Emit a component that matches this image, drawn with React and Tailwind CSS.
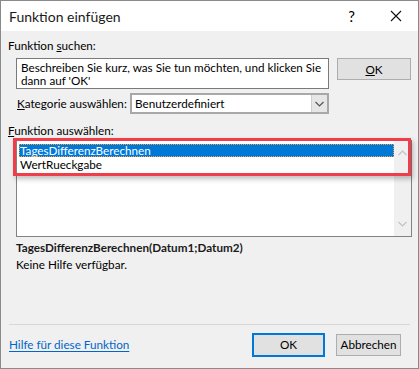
import React from 'react';

const font = { fontFamily: '"Segoe UI", Lato, "Liberation Sans", Arial, sans-serif' };

const Chevron = ({ up, className }) => (
  <svg width="9" height="6" viewBox="0 0 9 6" className={className}>
    <path d={up ? 'M0.5 5 L4.5 1 L8.5 5' : 'M0.5 1 L4.5 5 L8.5 1'} fill="none" stroke="currentColor" strokeWidth="1.2" />
  </svg>
);

export default function App() {
  return (
    <div
      className="w-[419px] h-[369px] border border-[#8a8a8a] bg-[#f0f0f0] text-[11.7px] text-black flex flex-col"
      style={font}
    >
      {/* title bar */}
      <div className="h-[30px] bg-white flex items-center pl-[8px] shrink-0">
        <span className="text-[14px] text-[#1a1a1a]">Funktion einfügen</span>
        <span className="ml-auto text-[15px] mr-[35px]">?</span>
        <svg width="12" height="12" viewBox="0 0 12 12" className="mr-[16px]">
          <path d="M1 1 L11 11 M11 1 L1 11" stroke="#111" strokeWidth="1.1" />
        </svg>
      </div>

      <div className="flex-1 flex flex-col px-[7px]">
        <div className="mt-[7px] leading-[14px]">
          Funktion <span className="underline">s</span>uchen:
        </div>

        <div className="mt-[6px] flex">
          <div className="ml-[8px] w-[313px] h-[31px] bg-white border border-[#7a7a7a] px-[4px] pt-[2px] leading-[13px]">
            Beschreiben Sie kurz, was Sie tun möchten, und klicken Sie dann auf 'OK'
          </div>
          <button className="ml-[8px] w-[74px] h-[22px] bg-[#e1e1e1] border border-[#adadad] leading-[20px]">
            <span className="underline">O</span>K
          </button>
        </div>

        <div className="mt-[4px] flex items-center">
          <span className="ml-[9px] w-[113px] whitespace-nowrap">
            <span className="underline">K</span>ategorie auswählen:
          </span>
          <div className="w-[199px] h-[21px] bg-white border-2 border-[#a8a8a8] flex items-center">
            <span className="pl-[3px] flex-1">Benutzerdefiniert</span>
            <div className="w-[16px] h-full bg-[#e6e6e6] border-l border-[#cfcfcf] flex items-center justify-center text-[#555]">
              <Chevron />
            </div>
          </div>
        </div>

        <div className="mt-[9px] leading-[14px]">
          <span className="underline">F</span>unktion auswählen:
        </div>

        <div className="mt-[3px] ml-[8px] w-[396px] h-[97px] bg-white border border-[#828282] relative flex">
          <div className="flex-1 pt-[3px] pl-[2px]">
            <div className="bg-[#0078d7] text-white outline outline-1 outline-dotted outline-[#f0a030] -outline-offset-1 px-[1px] h-[13px] leading-[13px]">
              TagesDifferenzBerechnen
            </div>
            <div className="px-[1px] h-[14px] leading-[14px]">WertRueckgabe</div>
          </div>
          <div className="w-[17px] bg-[#f0f0f0] flex flex-col items-center justify-between py-[9px] text-[#c2c2c2]">
            <Chevron up />
            <Chevron />
          </div>
          <div className="absolute left-[-4px] top-[-3px] w-[398px] h-[38px] border-[3px] border-[#ef3e4a] shadow-[2px_3px_5px_rgba(0,0,0,0.25)]" />
        </div>

        <div className="mt-[2px] ml-[8px] font-bold leading-[17px] text-[#1a1a1a]">
          TagesDifferenzBerechnen(Datum1;Datum2)
        </div>
        <div className="ml-[8px] leading-[16px]">Keine Hilfe verfügbar.</div>

        <div className="mt-auto border-t border-[#d8d8d8] mx-[1px]" />

        <div className="h-[43px] flex items-center pb-[3px]">
          <span className="pl-[1px] text-[#0066cc] underline underline-offset-2">Hilfe für diese Funktion</span>
          <button className="ml-auto w-[73px] h-[24px] bg-[#e1e1e1] border-2 border-[#0078d7]">OK</button>
          <button className="ml-[11px] mr-[10px] w-[65px] h-[22px] bg-[#e1e1e1] border border-[#adadad]">Abbrechen</button>
        </div>
      </div>
    </div>
  );
}
